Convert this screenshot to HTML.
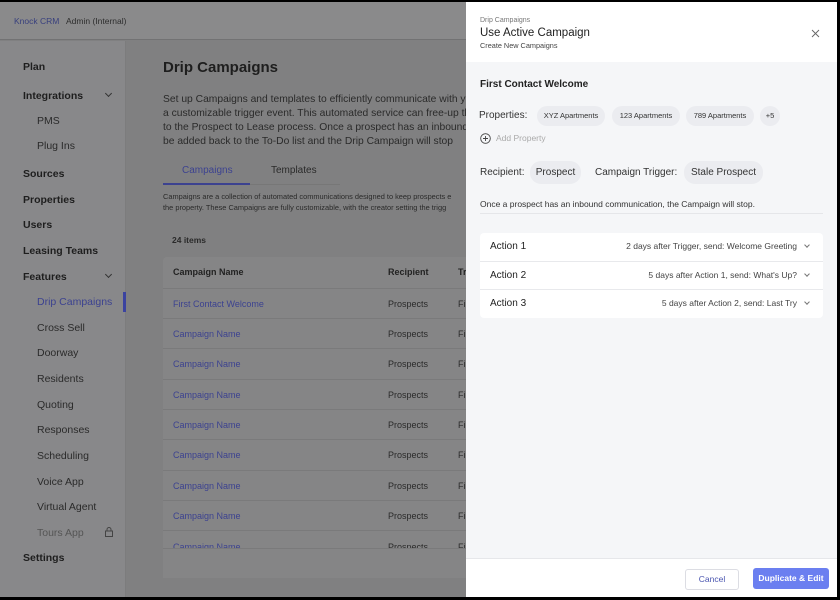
<!DOCTYPE html>
<html><head><meta charset="utf-8"><style>
*{margin:0;padding:0;box-sizing:border-box}
body{width:840px;height:600px;overflow:hidden;position:relative;background:#000;font-family:"Liberation Sans",sans-serif}
.a{position:absolute;white-space:nowrap}
#bg{position:absolute;left:0;top:2px;width:837px;height:595px;background:#808081}
#hdr{position:absolute;left:0;top:2px;width:466px;height:38px;background:#8a8a8b;border-bottom:1px solid #727273}
#side{position:absolute;left:0;top:41px;width:126px;height:556px;background:#88888a;border-right:1px solid #7c7c7d}
.s{position:absolute;font-size:10.5px;color:#222;transform:translateY(-50%)}
.s.b{font-weight:bold;color:#1e1e1e;left:23px}
.s.c{left:37px;color:#2a2a2a}
.m{position:absolute;color:#252525}
.tb{position:absolute;left:163px;top:257px;width:310px;height:321px;background:#858586;border-radius:4px}
.row{position:absolute;left:163px;width:303px;border-top:1px solid #7a7a7b}
.cn{position:absolute;left:173px;font-size:9px;color:#3c4290;transform:translateY(-50%)}
.cr{position:absolute;left:388px;font-size:9px;color:#2a2a2a;transform:translateY(-50%)}
.ct{position:absolute;left:458px;font-size:9px;color:#2a2a2a;transform:translateY(-50%)}
#panel{position:absolute;left:466px;top:2px;width:371px;height:595px;background:#f5f6f8}
#ph{position:absolute;left:0;top:0;width:371px;height:60px;background:#fff}
#pf{position:absolute;left:0;top:556px;width:371px;height:39px;background:#fff;border-top:1px solid #e6e7ea}
.p{position:absolute;white-space:nowrap;color:#222}
.chip{position:absolute;background:#ebecf0;border-radius:11px;color:#333;text-align:center}
.act{position:absolute;left:14px;width:343px;height:28px;background:#fff}
.act .l{position:absolute;left:10px;top:8px;font-size:10px;color:#222}
.act .r{position:absolute;right:26px;top:8px;font-size:8.5px;color:#444}
.act .v{position:absolute;right:14px;top:10px;width:4px;height:4px;border-right:1px solid #777;border-bottom:1px solid #777;transform:rotate(45deg)}
</style></head><body>
<div id="bg"></div>
<div id="hdr">
<div class="a" style="left:14px;top:14px;font-size:8.5px;color:#39407e">Knock CRM</div>
<div class="a" style="left:66px;top:14px;font-size:8.5px;color:#2e2e2e">Admin (Internal)</div>
</div>
<div id="side"></div>
<div class="s b" style="top:67px">Plan</div>
<div class="s b" style="top:96px">Integrations</div>
<div class="a" style="left:106px;top:91px;width:5px;height:5px;border-right:1px solid #333;border-bottom:1px solid #333;transform:rotate(45deg)"></div>
<div class="s c" style="top:121px">PMS</div>
<div class="s c" style="top:146px">Plug Ins</div>
<div class="s b" style="top:174px">Sources</div>
<div class="s b" style="top:200px">Properties</div>
<div class="s b" style="top:225px">Users</div>
<div class="s b" style="top:251px">Leasing Teams</div>
<div class="s b" style="top:277px">Features</div>
<div class="a" style="left:106px;top:272px;width:5px;height:5px;border-right:1px solid #333;border-bottom:1px solid #333;transform:rotate(45deg)"></div>
<div class="s c" style="top:302px;color:#3c4290">Drip Campaigns</div>
<div class="a" style="left:123px;top:292px;width:3px;height:20px;background:#3b43a0"></div>
<div class="s c" style="top:328px">Cross Sell</div>
<div class="s c" style="top:353px">Doorway</div>
<div class="s c" style="top:379px">Residents</div>
<div class="s c" style="top:405px">Quoting</div>
<div class="s c" style="top:430px">Responses</div>
<div class="s c" style="top:456px">Scheduling</div>
<div class="s c" style="top:482px">Voice App</div>
<div class="s c" style="top:507px">Virtual Agent</div>
<div class="s c" style="top:533px;color:#555">Tours App</div>
<svg class="a" style="left:105px;top:527px" width="8" height="10" viewBox="0 0 8 10"><rect x="0.5" y="4" width="7" height="5.5" fill="none" stroke="#444"/><path d="M2 4V2.5a2 2 0 0 1 4 0V4" fill="none" stroke="#444"/></svg>
<div class="s b" style="top:558px">Settings</div>

<div class="m" style="left:163px;top:59px;font-size:15px;font-weight:bold;color:#1e1e1e">Drip Campaigns</div>
<div class="m" style="left:163px;top:93px;font-size:10.3px;line-height:14px;width:303px;overflow:hidden;white-space:nowrap;color:#2a2a2a">Set up Campaigns and templates to efficiently communicate with you<br>a customizable trigger event. This automated service can free-up the<br>to the Prospect to Lease process. Once a prospect has an inbound co<br>be added back to the To-Do list and the Drip Campaign will stop</div>
<div class="m" style="left:182px;top:165px;font-size:10px;color:#3c4290">Campaigns</div>
<div class="m" style="left:271px;top:165px;font-size:10px;color:#2a2a2a">Templates</div>
<div class="a" style="left:163px;top:184px;width:177px;height:1px;background:#777"></div>
<div class="a" style="left:163px;top:183px;width:87px;height:2px;background:#3c4290"></div>
<div class="m" style="left:163px;top:191px;font-size:7.4px;line-height:11px;width:303px;overflow:hidden;white-space:nowrap;color:#2a2a2a">Campaigns are a collection of automated communications designed to keep prospects e<br>the property. These Campaigns are fully customizable, with the creator setting the trigg</div>
<div class="m" style="left:172px;top:235px;font-size:8.5px;font-weight:bold;color:#2a2a2a">24 items</div>
<div class="tb"></div>
<div class="m" style="left:173px;top:267px;font-size:9px;font-weight:bold;color:#222">Campaign Name</div>
<div class="m" style="left:388px;top:267px;font-size:9px;font-weight:bold;color:#222">Recipient</div>
<div class="m" style="left:458px;top:267px;font-size:9px;font-weight:bold;color:#222">Tr</div>
<div class="row" style="top:288px"></div><div class="row" style="top:318px"></div><div class="row" style="top:348px"></div><div class="row" style="top:379px"></div><div class="row" style="top:409px"></div><div class="row" style="top:439px"></div><div class="row" style="top:470px"></div><div class="row" style="top:500px"></div><div class="row" style="top:530px"></div>
<div class="a" style="left:163px;top:548px;width:303px;height:30px;background:#858586;border-top:1px solid #7a7a7b;z-index:2"></div>
<div class="cn" style="top:304px">First Contact Welcome</div><div class="cr" style="top:304px">Prospects</div><div class="ct" style="top:304px">Fi</div>
<div class="cn" style="top:334px">Campaign Name</div><div class="cr" style="top:334px">Prospects</div><div class="ct" style="top:334px">Fi</div>
<div class="cn" style="top:364px">Campaign Name</div><div class="cr" style="top:364px">Prospects</div><div class="ct" style="top:364px">Fi</div>
<div class="cn" style="top:395px">Campaign Name</div><div class="cr" style="top:395px">Prospects</div><div class="ct" style="top:395px">Fi</div>
<div class="cn" style="top:425px">Campaign Name</div><div class="cr" style="top:425px">Prospects</div><div class="ct" style="top:425px">Fi</div>
<div class="cn" style="top:455px">Campaign Name</div><div class="cr" style="top:455px">Prospects</div><div class="ct" style="top:455px">Fi</div>
<div class="cn" style="top:486px">Campaign Name</div><div class="cr" style="top:486px">Prospects</div><div class="ct" style="top:486px">Fi</div>
<div class="cn" style="top:516px">Campaign Name</div><div class="cr" style="top:516px">Prospects</div><div class="ct" style="top:516px">Fi</div>
<div class="cn" style="top:547px">Campaign Name</div><div class="cr" style="top:547px">Prospects</div><div class="ct" style="top:547px">Fi</div>

<div id="panel">
<div id="ph">
<div class="p" style="left:14px;top:15px;font-size:7px;color:#777">Drip Campaigns</div>
<div class="p" style="left:14px;top:25px;font-size:11.5px;color:#1e1e1e">Use Active Campaign</div>
<div class="p" style="left:14px;top:39px;font-size:7.3px;color:#444">Create New Campaigns</div>
<svg class="p" style="left:345px;top:27px" width="9" height="9" viewBox="0 0 9 9"><path d="M1 1L8 8M8 1L1 8" stroke="#666" stroke-width="0.9"/></svg>
</div>
<div class="p" style="left:14px;top:77px;font-size:10px;font-weight:bold;color:#222">First Contact Welcome</div>
<div class="p" style="left:13px;top:108px;font-size:10px;color:#333">Properties:</div>
<div class="chip" style="left:71px;top:104px;width:68px;height:20px;font-size:7.5px;line-height:20px">XYZ Apartments</div>
<div class="chip" style="left:146px;top:104px;width:68px;height:20px;font-size:7.5px;line-height:20px">123 Apartments</div>
<div class="chip" style="left:220px;top:104px;width:68px;height:20px;font-size:7.5px;line-height:20px">789 Apartments</div>
<div class="chip" style="left:294px;top:104px;width:20px;height:20px;font-size:7.5px;line-height:20px">+5</div>
<svg class="p" style="left:14px;top:131px" width="11" height="11" viewBox="0 0 11 11"><circle cx="5.5" cy="5.5" r="4.8" fill="none" stroke="#444" stroke-width="0.9"/><path d="M5.5 3v5M3 5.5h5" stroke="#444" stroke-width="0.9"/></svg>
<div class="p" style="left:30px;top:131px;font-size:8.5px;color:#aaa">Add Property</div>
<div class="p" style="left:14px;top:165px;font-size:10px;color:#333">Recipient:</div>
<div class="chip" style="left:64px;top:159px;width:51px;height:23px;font-size:10px;line-height:23px">Prospect</div>
<div class="p" style="left:129px;top:165px;font-size:10px;color:#333">Campaign Trigger:</div>
<div class="chip" style="left:218px;top:159px;width:79px;height:23px;font-size:10px;line-height:23px">Stale Prospect</div>
<div class="p" style="left:14px;top:197px;font-size:8.5px;color:#333">Once a prospect has an inbound communication, the Campaign will stop.</div>
<div class="p" style="left:14px;top:211px;width:343px;height:1px;background:#e5e6e9"></div>
<div class="act" style="top:231px;border-radius:4px 4px 0 0"><div class="l">Action 1</div><div class="r">2 days after Trigger, send: Welcome Greeting</div><div class="v"></div></div>
<div class="act" style="top:259px;border-top:1px solid #e8e9ec"><div class="l">Action 2</div><div class="r">5 days after Action 1, send: What's Up?</div><div class="v"></div></div>
<div class="act" style="top:287px;border-top:1px solid #e8e9ec;height:29px;border-radius:0 0 4px 4px"><div class="l">Action 3</div><div class="r">5 days after Action 2, send: Last Try</div><div class="v"></div></div>
<div id="pf">
<div class="p" style="left:219px;top:10px;width:54px;height:21px;border:1px solid #dcdde3;border-radius:3px;font-size:8.5px;color:#4a55b0;text-align:center;line-height:19px">Cancel</div>
<div class="p" style="left:287px;top:9px;width:76px;height:21px;background:#6b7ff0;border-radius:3px;font-size:8.5px;color:#fff;font-weight:bold;text-align:center;line-height:21px">Duplicate &amp; Edit</div>
</div>
</div>
</body></html>
